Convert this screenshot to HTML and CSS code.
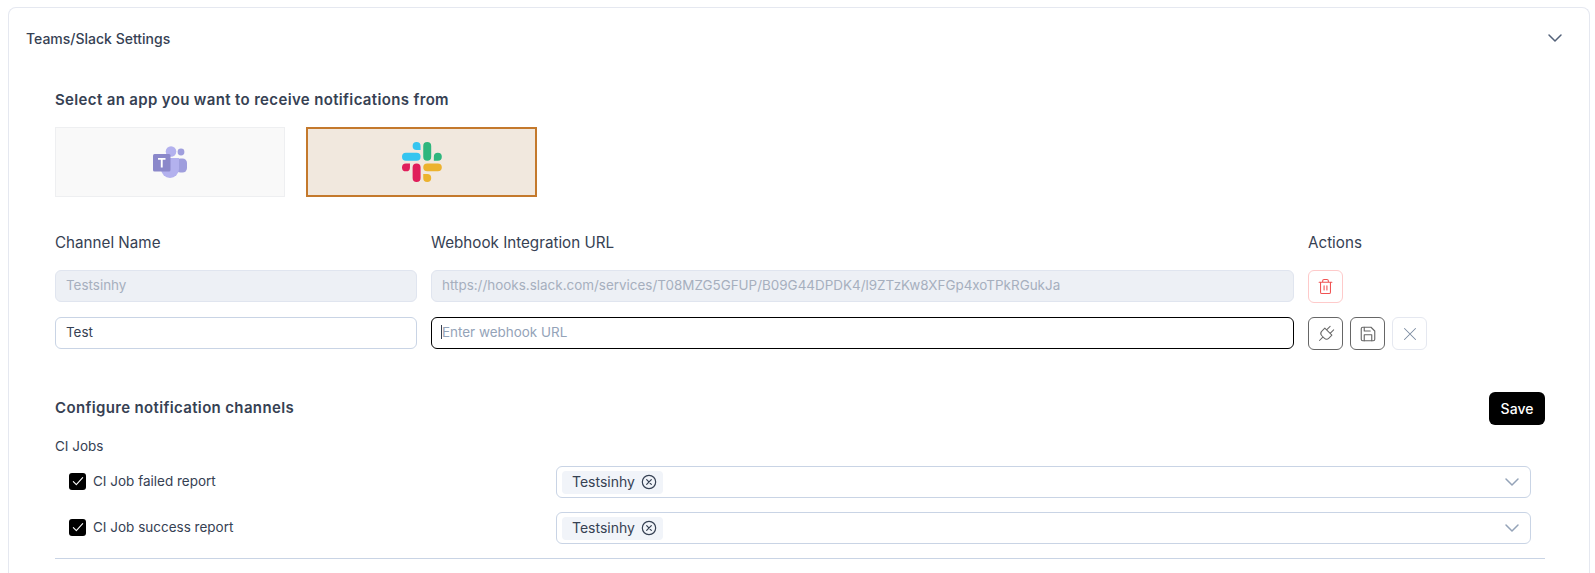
FILE: index.html
```html
<!DOCTYPE html>
<html lang="en">
<head>
  <meta charset="UTF-8">
  <title>Teams/Slack Settings</title>
  <link rel="stylesheet" href="styles.css">
</head>
<body>

  <div class="card">
    <div class="card-header">
      <span class="card-title">Teams/Slack Settings</span>
      <svg class="chevron dark" viewBox="0 0 24 24"><path d="m4 8 8 8 8-8"/></svg>
    </div>

    <div class="card-body">
      <h2 class="section-title">Select an app you want to receive notifications from</h2>

      <div class="app-list">
        <button class="app-tile">
          <svg class="teams-logo" viewBox="0 0 34 32">
            <rect x="23" y="12.5" width="11" height="14" rx="4.5" fill="#9f9edd"/>
            <circle cx="28" cy="6" r="3.4" fill="#9f9edd"/>
            <path d="M8 12h18v11a9 9 0 0 1-18 0z" fill="#b3b1ee"/>
            <circle cx="18" cy="5.5" r="5.3" fill="#b3b1ee"/>
            <rect x="0" y="8" width="17.5" height="17.5" rx="1.5" fill="#8b88ca"/>
            <path d="M5 12h7.500v1.800h-2.800v7.700h-1.900v-7.700h-2.800z" fill="#fff"/>
          </svg>
        </button>
        <button class="app-tile selected">
          <svg class="slack-logo" viewBox="0 0 54 54">
            <path fill="#36c5f0" d="M19.712.133a5.381 5.381 0 0 0-5.376 5.387 5.381 5.381 0 0 0 5.376 5.386h5.376V5.52A5.381 5.381 0 0 0 19.712.133m0 14.365H5.376A5.381 5.381 0 0 0 0 19.884a5.381 5.381 0 0 0 5.376 5.387h14.336a5.381 5.381 0 0 0 5.376-5.387 5.381 5.381 0 0 0-5.376-5.386"/>
            <path fill="#2eb67d" d="M53.76 19.884a5.381 5.381 0 0 0-5.376-5.386 5.381 5.381 0 0 0-5.376 5.386v5.387h5.376a5.381 5.381 0 0 0 5.376-5.387m-14.336 0V5.52A5.381 5.381 0 0 0 34.048.133a5.381 5.381 0 0 0-5.376 5.387v14.364a5.381 5.381 0 0 0 5.376 5.387 5.381 5.381 0 0 0 5.376-5.387"/>
            <path fill="#ecb22e" d="M34.048 54a5.381 5.381 0 0 0 5.376-5.387 5.381 5.381 0 0 0-5.376-5.386h-5.376v5.386A5.381 5.381 0 0 0 34.048 54m0-14.365h14.336a5.381 5.381 0 0 0 5.376-5.386 5.381 5.381 0 0 0-5.376-5.387H34.048a5.381 5.381 0 0 0-5.376 5.387 5.381 5.381 0 0 0 5.376 5.386"/>
            <path fill="#e01e5a" d="M0 34.249a5.381 5.381 0 0 0 5.376 5.386 5.381 5.381 0 0 0 5.376-5.386v-5.387H5.376A5.381 5.381 0 0 0 0 34.249m14.336 0v14.364A5.381 5.381 0 0 0 19.712 54a5.381 5.381 0 0 0 5.376-5.387V34.249a5.381 5.381 0 0 0-5.376-5.387 5.381 5.381 0 0 0-5.376 5.387"/>
          </svg>
        </button>
      </div>

      <div class="channel-grid">
        <div class="col-label">Channel Name</div>
        <div class="col-label">Webhook Integration URL</div>
        <div class="col-label">Actions</div>

        <input class="field" type="text" value="Testsinhy" disabled>
        <input class="field" type="text" value="https://hooks.slack.com/services/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" disabled>
        <div class="actions">
          <button class="icon-btn danger">
            <svg class="icon-trash" viewBox="0 0 24 24"><path d="M3 6h18M19 6v14a2 2 0 0 1-2 2H7a2 2 0 0 1-2-2V6M8 6V4a2 2 0 0 1 2-2h4a2 2 0 0 1 2 2v2M10 11v6M14 11v6"/></svg>
          </button>
        </div>

        <input class="field" type="text" value="Test">
        <div class="caret-wrap">
          <input class="field focused" type="text" placeholder="Enter webhook URL">
          <span class="caret"></span>
        </div>
        <div class="actions">
          <button class="icon-btn strong">
            <svg class="icon-plug" viewBox="0 0 24 24"><g transform="rotate(45 12 12)"><path d="M12 23v-6M9 8V2M15 8V2M18 8v5a4 4 0 0 1-4 4h-4a4 4 0 0 1-4-4V8z"/></g></svg>
          </button>
          <button class="icon-btn strong">
            <svg class="icon-save" viewBox="0 0 24 24"><path d="M19 21H5a2 2 0 0 1-2-2V5a2 2 0 0 1 2-2h11l5 5v11a2 2 0 0 1-2 2z"/><path d="M17 21v-8H7v8M7 3v5h8"/></svg>
          </button>
          <button class="icon-btn plain">
            <svg class="icon-close" viewBox="0 0 24 24"><path d="M18 6 6 18M6 6l12 12"/></svg>
          </button>
        </div>
      </div>

      <div class="config-head">
        <h2 class="section-title">Configure notification channels</h2>
        <button class="save-btn">Save</button>
      </div>

      <div class="group-label">CI Jobs</div>

      <div class="notify-row">
        <label class="check-label"><span class="check"><svg viewBox="0 0 24 24"><path d="m5 13 4.500 4.500L19 7"/></svg></span>CI Job failed report</label>
        <div class="multi-select">
          <span class="tag">Testsinhy
            <svg viewBox="0 0 24 24"><circle cx="12" cy="12" r="10"/><path d="m8.500 8.500 7 7M15.500 8.500l-7 7"/></svg>
          </span>
          <svg class="chevron" viewBox="0 0 24 24"><path d="m4 8 8 8 8-8"/></svg>
        </div>
      </div>
      <div class="notify-row">
        <label class="check-label"><span class="check"><svg viewBox="0 0 24 24"><path d="m5 13 4.500 4.500L19 7"/></svg></span>CI Job success report</label>
        <div class="multi-select">
          <span class="tag">Testsinhy
            <svg viewBox="0 0 24 24"><circle cx="12" cy="12" r="10"/><path d="m8.500 8.500 7 7M15.500 8.500l-7 7"/></svg>
          </span>
          <svg class="chevron" viewBox="0 0 24 24"><path d="m4 8 8 8 8-8"/></svg>
        </div>
      </div>

      <hr class="divider">
    </div>
  </div>

</body>
</html>
```

FILE: styles.css
```css
html, body {
  height: 100%;
  overflow: hidden;
}
body {
  margin: 0;
  padding: 7px 5px 0 8px;
  box-sizing: border-box;
  font-family: Inter, "Liberation Sans", sans-serif;
  font-size: 14px;
  color: #364153;
  background: #fff;
}
svg {
  fill: none;
  stroke: currentColor;
  stroke-width: 1.5;
  stroke-linecap: round;
  stroke-linejoin: round;
}
.teams-logo, .slack-logo {
  stroke: none;
}
.card {
  height: 100%;
  box-sizing: border-box;
  border: 1px solid #e5e8f0;
  border-bottom: none;
  border-radius: 8px 8px 0 0;
  overflow: hidden;
}
.card-header {
  display: flex;
  justify-content: space-between;
  align-items: center;
  height: 60px;
  padding: 0 25px 0 17px;
}
.card-title {
  font-weight: 500;
}
.chevron {
  width: 18px;
  height: 18px;
  color: #94a3b8;
  stroke-width: 2;
}
.chevron.dark {
  color: #536179;
}
.card-body {
  padding: 22px 44px 0 46px;
}
.section-title {
  margin: 0;
  font-size: 15px;
  font-weight: 600;
  letter-spacing: 0.35px;
  line-height: 20px;
}
.app-list {
  display: flex;
  gap: 21px;
  margin-top: 17px;
}
.app-tile {
  display: flex;
  align-items: center;
  justify-content: center;
  width: 230px;
  height: 70px;
  padding: 0;
  background: #f9f9f9;
  border: 1px solid #eeeff1;
}
.app-tile.selected {
  width: 231px;
  background: #f1e8de;
  border: 2px solid #c4792c;
}
.teams-logo {
  width: 34px;
  height: 32px;
}
.slack-logo {
  width: 40px;
  height: 40px;
}
.channel-grid {
  display: grid;
  grid-template-columns: 362px 863px 1fr;
  column-gap: 14px;
  row-gap: 14px;
  margin-top: 36px;
}
.col-label {
  font-size: 15.2px;
  line-height: 20px;
  margin-bottom: 3px;
}
.field {
  box-sizing: border-box;
  width: 100%;
  height: 32px;
  padding: 0 10px 2px;
  font-family: inherit;
  font-size: 13.45px;
  color: #364153;
  border: 1px solid #c9d4e5;
  border-radius: 6px;
  outline: none;
  background: #fff;
}
.field:disabled {
  background: #edf0f5;
  border-color: #e0e5ef;
  color: #a6afbe;
}
.field::placeholder {
  color: #94a3b8;
}
.field.focused {
  border-color: #000;
}
.caret-wrap {
  position: relative;
}
.caret {
  position: absolute;
  left: 10px;
  top: 8px;
  width: 1px;
  height: 14px;
  background: #364153;
}
.actions {
  display: flex;
  gap: 7px;
}
.icon-btn {
  display: flex;
  align-items: center;
  justify-content: center;
  box-sizing: border-box;
  width: 35px;
  height: 33px;
  padding: 0;
  background: #fff;
  border: 1px solid #e5e8f0;
  border-radius: 6px;
}
.icon-trash {
  width: 17px;
  height: 17px;
}
.icon-plug {
  width: 20px;
  height: 20px;
  stroke-width: 1.2;
}
.icon-save {
  width: 18px;
  height: 18px;
}
.icon-close {
  width: 22px;
  height: 22px;
  stroke-width: 1.1;
}
.icon-btn.danger {
  border-color: #fecaca;
  color: #f05252;
}
.icon-btn.strong {
  border-color: #666;
  color: #666;
}
.icon-btn.plain {
  color: #7a8aa0;
}
.config-head {
  display: flex;
  justify-content: space-between;
  align-items: center;
  margin-top: 42px;
}
.config-head .section-title {
  margin-bottom: 2px;
}
.save-btn {
  box-sizing: border-box;
  width: 56px;
  height: 33px;
  padding: 0;
  font-family: inherit;
  font-size: 14px;
  font-weight: 500;
  color: #fff;
  background: #000;
  border: none;
  border-radius: 6px;
}
.group-label {
  margin-top: 11px;
  font-size: 13.5px;
  line-height: 20px;
}
.notify-row {
  display: grid;
  grid-template-columns: 487px 1fr;
  align-items: center;
  margin: 0 14px 14px;
  font-size: 13.5px;
}
.group-label + .notify-row {
  margin-top: 10px;
}
.check-label {
  display: flex;
  align-items: center;
  gap: 7px;
  padding-bottom: 2px;
}
.check {
  display: flex;
  align-items: center;
  justify-content: center;
  width: 17px;
  height: 17px;
  background: #000;
  border-radius: 3px;
  color: #fff;
}
.check svg {
  width: 16px;
  height: 16px;
  stroke-width: 1.6;
}
.multi-select {
  display: flex;
  justify-content: space-between;
  align-items: center;
  box-sizing: border-box;
  height: 32px;
  padding: 0 9px 0 5px;
  border: 1px solid #c9d4e5;
  border-radius: 6px;
}
.tag {
  display: flex;
  align-items: center;
  gap: 6px;
  box-sizing: border-box;
  width: 101px;
  height: 23px;
  padding: 0 6px 1px 10px;
  font-size: 14px;
  background: #f1f4f9;
  border-radius: 4px;
}
.tag svg {
  width: 16px;
  height: 16px;
  stroke-width: 1.8;
}
.divider {
  margin: 0;
  border: none;
  border-top: 1px solid #c9d4e5;
}
```
